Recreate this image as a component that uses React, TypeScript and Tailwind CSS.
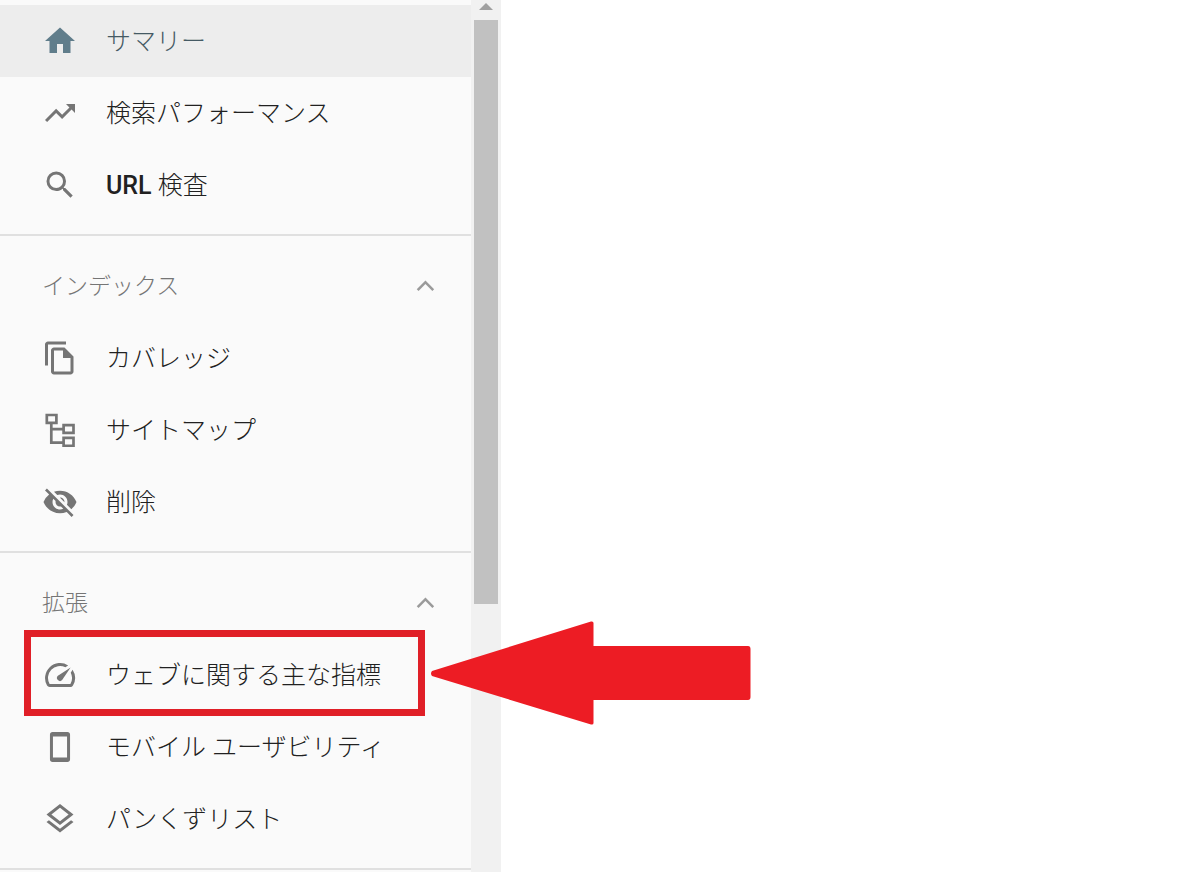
import type { ReactNode } from "react"
import { clsx } from "clsx"

const icons: Record<string, ReactNode> = {
  home: <path d="M10 20v-6h4v6h5v-8h3L12 3 2 12h3v8z" />,
  trending: <path d="M16 6l2.29 2.29-4.88 4.88-4-4L2 16.59 3.41 18l6-6 4 4 6.3-6.29L22 12V6z" />,
  search: (
    <path d="M15.5 14h-.79l-.28-.27A6.471 6.471 0 0 0 16 9.5 6.5 6.5 0 1 0 9.5 16c1.61 0 3.09-.59 4.23-1.57l.27.28v.79l5 4.99L20.49 19l-4.99-5zm-6 0C7.01 14 5 11.99 5 9.5S7.01 5 9.5 5 14 7.01 14 9.5 11.99 14 9.5 14z" />
  ),
  pages: (
    <path d="M16 1H4c-1.1 0-2 .9-2 2v14h2V3h12V1zm-1 4H8c-1.1 0-1.99.9-1.99 2L6 21c0 1.1.89 2 1.99 2H19c1.1 0 2-.9 2-2V11l-6-6zM8 21V7h6v5h5v9H8z" />
  ),
  tree: (
    <g fill="none" stroke="currentColor" strokeWidth="1.8">
      <path d="M3.2 2h6.4v5.2H3.2zM14.4 8.7H21v5.2h-6.6zM14.4 17.300H21v5.2h-6.6z" />
      <path d="M6.2 7.2v13.200h8.200M6.2 11.4h8.200" />
    </g>
  ),
  hidden: (
    <path d="M12 7c2.76 0 5 2.24 5 5 0 .65-.13 1.26-.36 1.83l2.92 2.92c1.51-1.26 2.7-2.89 3.43-4.75-1.73-4.39-6-7.5-11-7.5-1.4 0-2.74.25-3.98.7l2.16 2.16C10.74 7.13 11.35 7 12 7zM2 4.27l2.28 2.28.46.46A11.804 11.804 0 0 0 1 12c1.73 4.39 6 7.5 11 7.5 1.55 0 3.03-.3 4.38-.84l.42.42L19.73 22 21 20.73 3.27 3 2 4.27zM7.53 9.8l1.55 1.55c-.05.21-.08.43-.08.65 0 1.66 1.34 3 3 3 .22 0 .44-.03.65-.08l1.55 1.55c-.67.33-1.41.53-2.2.53-2.76 0-5-2.24-5-5 0-.79.2-1.53.53-2.2zm4.31-.78l3.15 3.15.02-.16c0-1.66-1.34-3-3-3l-.17.01z" />
  ),
  speed: (
    <path d="M20.38 8.57l-1.23 1.85a8 8 0 0 1-.22 7.58H5.07A8 8 0 0 1 15.58 6.85l1.85-1.23A10 10 0 0 0 3.35 19a2 2 0 0 0 1.72 1h13.85a2 2 0 0 0 1.74-1 10 10 0 0 0-.27-10.44zm-9.79 6.84a2 2 0 0 0 2.83 0l5.66-8.49-8.49 5.66a2 2 0 0 0 0 2.83z" />
  ),
  phone: (
    <path
      fillRule="evenodd"
      d="M7 2h10c1 0 1.7.8 1.7 1.7v16.6c0 1-.8 1.7-1.7 1.7H7c-1 0-1.7-.8-1.7-1.7V3.7C5.3 2.8 6 2 7 2zm.3 3v14h9.4V5z"
    />
  ),
  layers: (
    <path d="M11.99 18.54l-7.37-5.73L3 14.07l9 7 9-7-1.63-1.27-7.38 5.74zM12 16l7.36-5.73L21 9l-9-7-9 7 1.63 1.27L12 16zm0-11.47L17.74 9 12 13.47 6.26 9 12 4.53z" />
  ),
  chevronUp: <path d="M12.3 8.3l-5.8 5.8 1.2 1.2 4.6-4.6 4.6 4.6 1.2-1.2z" />,
}

const groups = [
  {
    title: null,
    items: [
      { icon: "home", label: "サマリー", active: true },
      { icon: "trending", label: "検索パフォーマンス" },
      { icon: "search", label: "URL 検査" },
    ],
  },
  {
    title: "インデックス",
    items: [
      { icon: "pages", label: "カバレッジ" },
      { icon: "tree", label: "サイトマップ" },
      { icon: "hidden", label: "削除" },
    ],
  },
  {
    title: "拡張",
    items: [
      { icon: "speed", label: "ウェブに関する主な指標", marked: true },
      { icon: "phone", label: "モバイル ユーザビリティ" },
      { icon: "layers", label: "パンくずリスト" },
    ],
  },
]

function Icon({ name, className }: { name: string; className?: string }) {
  return (
    <svg viewBox="0 0 24 24" fill="currentColor" aria-hidden="true" className={clsx("size-9 shrink-0", className)}>
      {icons[name]}
    </svg>
  )
}

function Marker() {
  return (
    <>
      <div className="pointer-events-none absolute -top-[9px] -bottom-[5px] left-6 w-[401px] border-[7px] border-[#e01f27]" />
      <svg
        viewBox="0 0 320 104"
        fill="#ed1c24"
        aria-hidden="true"
        className="pointer-events-none absolute -top-[18px] left-[431px] z-10 h-[104px] w-80"
      >
        <path d="M1 50L160 .5Q162.5 0 162.5 2V25H317Q319.5 25 319.5 28V76Q319.5 79 317 79H162.5V102Q162.5 104 160 103.5L1 55Q-1 52.5 1 50z" />
      </svg>
    </>
  )
}

export default function App() {
  return (
    <div className="flex min-h-screen overflow-x-hidden bg-white font-['Roboto','Noto_Sans_CJK_JP',sans-serif]">
      <aside className="flex w-[501px] shrink-0 bg-[#fafafa]">
        <nav className="flex-1 pt-[5px]">
          {groups.map((group, index) => (
            <section key={index} className={clsx("border-b-2 border-[#e0e0e0] pb-[13px]", group.title && "pt-[14px]")}>
              {group.title && (
                <button
                  type="button"
                  className="flex h-[72px] w-full items-center justify-between pr-7 pl-[42px] text-[23px] font-light text-[#757575]"
                >
                  <span className="pt-0.5">{group.title}</span>
                  <Icon name="chevronUp" className="text-[#9a9a9a]" />
                </button>
              )}
              <ul>
                {group.items.map((item) => (
                  <li key={item.label} className="relative">
                    <a
                      href="#"
                      className={clsx(
                        "flex h-[72px] items-center gap-7 pl-[42px] text-[25px] whitespace-nowrap",
                        item.active ? "bg-[#ededed] text-[#455a64]" : "text-[#212121]"
                      )}
                    >
                      <Icon name={item.icon} className={item.active ? "text-[#607d8b]" : "text-[#757575]"} />
                      <span className="pt-0.5 font-light">
                        {item.label.startsWith("URL") ? (
                          <>
                            <span className="font-medium">URL</span>
                            {item.label.slice(3)}
                          </>
                        ) : (
                          item.label
                        )}
                      </span>
                    </a>
                    {item.marked && <Marker />}
                  </li>
                ))}
              </ul>
            </section>
          ))}
        </nav>

        {/* Scrollbar */}
        <div className="flex w-[30px] flex-col items-center bg-[#f1f1f1]">
          <svg viewBox="0 0 24 20" aria-hidden="true" className="h-5 w-6" fill="#a0a0a0">
            <path d="M12 3l7 7H5z" />
          </svg>
          <div className="h-[584px] w-6 bg-[#c1c1c1]" />
        </div>
      </aside>
      <main className="flex-1" />
    </div>
  )
}
